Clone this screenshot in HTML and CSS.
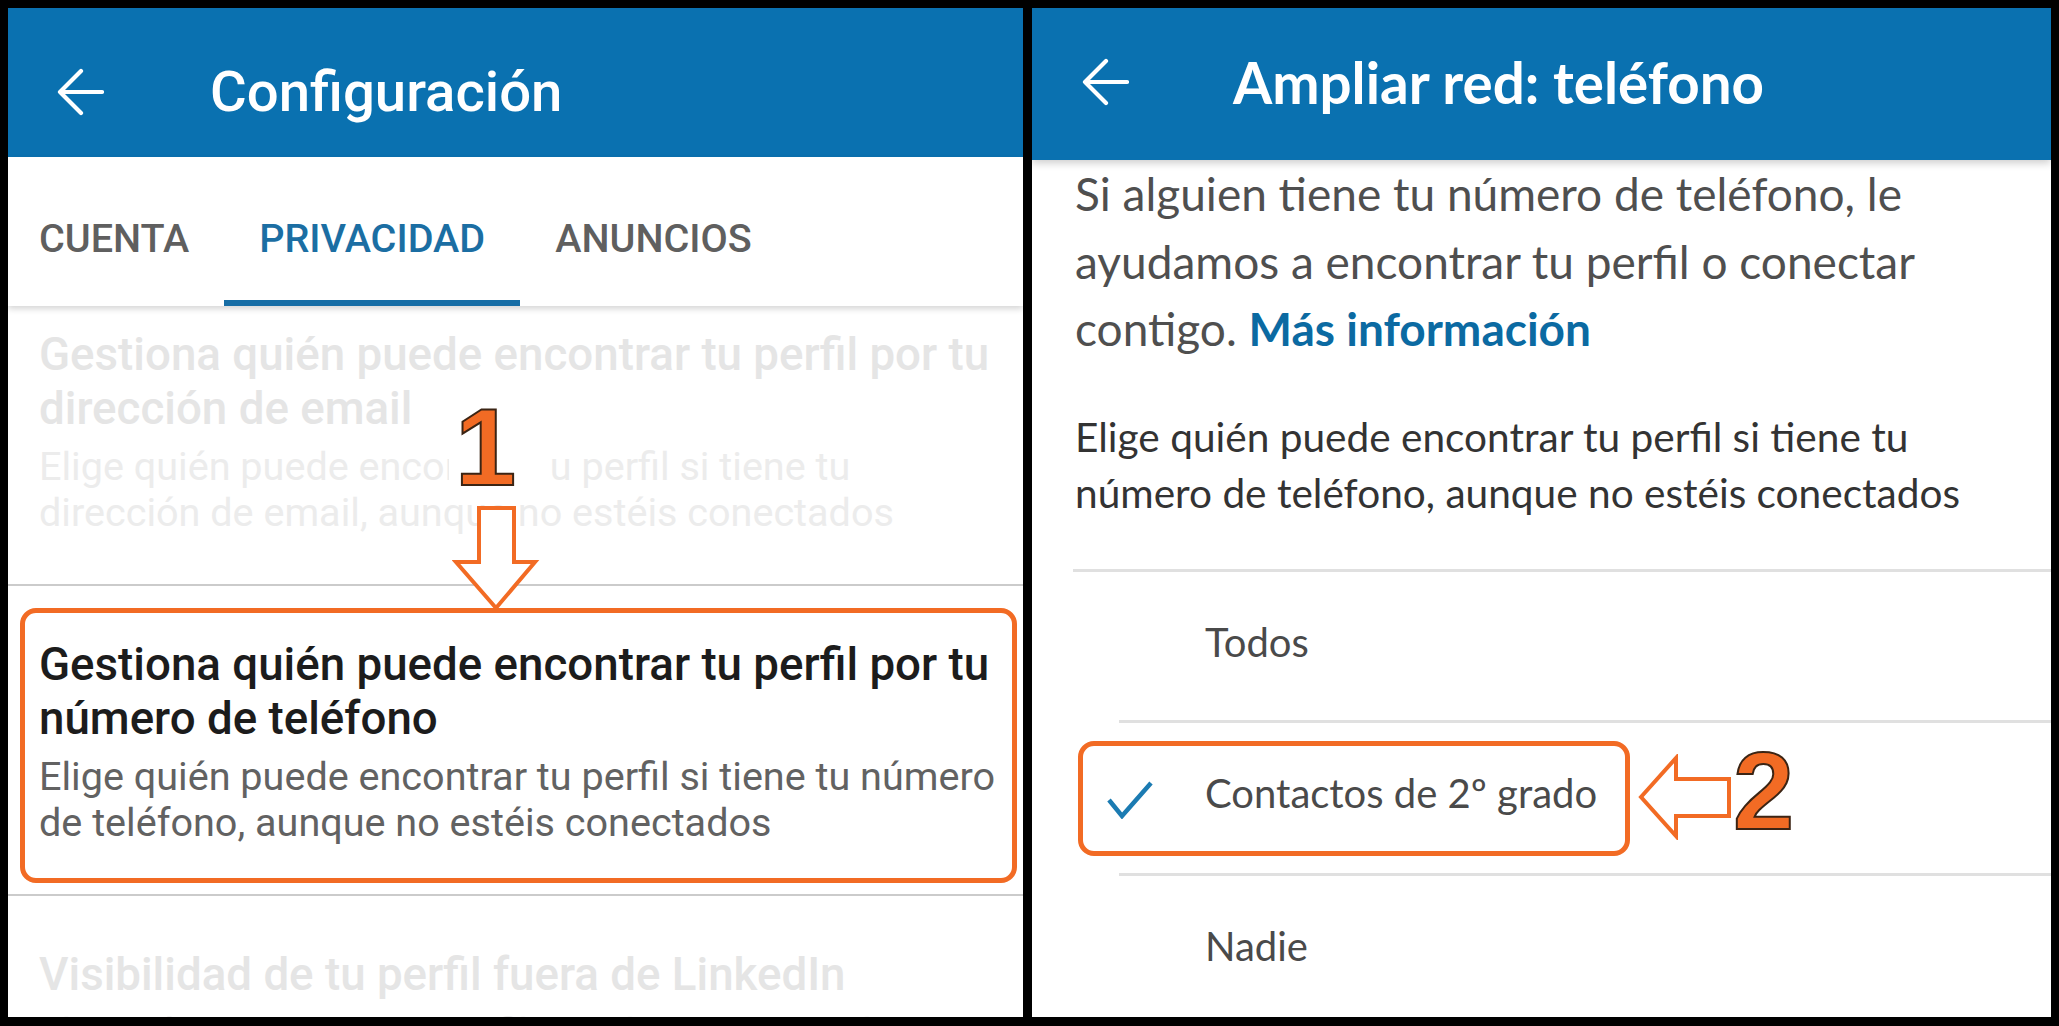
FILE: index.html
```html
<!DOCTYPE html>
<html lang="es">
<head>
<meta charset="utf-8">
<title>Configuración</title>
<link rel="stylesheet" href="styles.css">
</head>
<body>
<div class="frame">
  <section class="panel left">
    <header class="appbar">
      <svg class="back" viewBox="0 0 48 48"><path d="M4 24H46M25 3L4 24L25 45"/></svg>
      <h1 class="title">Configuración</h1>
    </header>
    <nav class="tabs">
      <div class="tab first">CUENTA</div>
      <div class="tab active">PRIVACIDAD</div>
      <div class="tab">ANUNCIOS</div>
    </nav>
    <div class="list">
      <div class="item faded scrolled">
        <div class="item-title">Gestiona quién puede encontrar tu perfil por tu<br>dirección de email</div>
        <div class="item-sub">Elige quién puede encontrar tu perfil si tiene tu<br>dirección de email, aunque no estéis conectados</div>
      </div>
      <div class="item">
        <div class="item-title">Gestiona quién puede encontrar tu perfil por tu<br>número de teléfono</div>
        <div class="item-sub">Elige quién puede encontrar tu perfil si tiene tu número<br>de teléfono, aunque no estéis conectados</div>
      </div>
      <div class="item faded">
        <div class="item-title">Visibilidad de tu perfil fuera de LinkedIn</div>
        <div class="item-sub">Elige cómo aparece tu perfil para los usuarios de otros servicios</div>
      </div>
    </div>
  </section>

  <section class="panel right">
    <header class="appbar">
      <svg class="back" viewBox="0 0 48 48"><path d="M4 24H46M25 3L4 24L25 45"/></svg>
      <h1 class="title">Ampliar red: teléfono</h1>
    </header>
    <div class="content">
      <p class="para1">Si alguien tiene tu número de teléfono, le<br>ayudamos a encontrar tu perfil o conectar<br>contigo. <a class="link">Más información</a></p>
      <p class="para2">Elige quién puede encontrar tu perfil si tiene tu<br>número de teléfono, aunque no estéis conectados</p>
      <div class="options">
        <div class="option"><span class="mark"></span><span class="label">Todos</span></div>
        <div class="option"><span class="mark"><svg class="check" viewBox="0 0 46 38"><path d="M2 19L15 35L44 2"/></svg></span><span class="label">Contactos de 2º grado</span></div>
        <div class="option"><span class="mark"></span><span class="label">Nadie</span></div>
      </div>
    </div>
  </section>

  <div class="hl hl1"></div>
  <div class="num n1">1</div>
  <svg class="arrow a1" viewBox="0 0 88 110"><polygon points="27,4 62,4 62,58 83,58 44,104 4,58 27,58"/></svg>

  <div class="hl hl2"></div>
  <svg class="arrow a2" viewBox="0 0 96 86"><polygon points="4,43 39,4 39,25 92,25 92,62 39,62 39,82"/></svg>
  <div class="num n2">2</div>
</div>
</body>
</html>
```
FILE: styles.css
```css
* { box-sizing: border-box; margin: 0; padding: 0; }
html, body { background: #000; }
body { width: 2059px; height: 1026px; overflow: hidden; }

.frame {
  position: relative;
  display: flex;
  gap: 9px;
  width: 2059px;
  height: 1026px;
  padding: 8px 8px 9px;
}

.panel {
  background: #fff;
  height: 1009px;
  overflow: hidden;
  display: flex;
  flex-direction: column;
}
.left { width: 1015px; font-family: Roboto, "Noto Sans", sans-serif; }
.right { width: 1019px; font-family: Lato, "Open Sans", sans-serif; }

/* app bars */
.appbar {
  flex: none;
  background: #0a71b0;
  color: #fff;
  display: flex;
  align-items: center;
}
.left .appbar { height: 149px; padding-top: 18px; padding-left: 48px; }
.right .appbar {
  height: 152px;
  padding-bottom: 5px;
  padding-left: 49px;
  position: relative;
  z-index: 1;
  box-shadow: 0 3px 8px rgba(0, 0, 0, 0.2);
}
.back {
  flex: none;
  width: 48px;
  height: 48px;
  fill: none;
  stroke: #fff;
  stroke-width: 4.2;
  stroke-linecap: round;
  stroke-linejoin: round;
}
.title { font-size: 56px; white-space: nowrap; }
.left .title { margin-left: 106px; font-weight: 500; font-size: 56.3px; }
.right .title { margin-left: 104px; font-weight: 700; font-size: 56.5px; }

/* tabs */
.tabs {
  flex: none;
  display: flex;
  height: 149px;
  background: #fff;
  position: relative;
  z-index: 1;
  box-shadow: 0 3px 6px rgba(0, 0, 0, 0.16);
}
.tab {
  display: flex;
  align-items: center;
  padding: 20px 35px 0;
  border-bottom: 6px solid transparent;
  font-size: 39.6px;
  font-weight: 500;
  color: #5f5f5f;
}
.tab.first { padding-left: 31px; }
.tab.active { color: #1b6ea3; border-bottom-color: #176ea6; }

/* list */
.list { flex: 1; overflow: hidden; }
.item {
  padding: 52px 31px 48px;
  border-bottom: 2px solid #cbcbcb;
}
.item.scrolled { padding-top: 22px; }
.item-title {
  font-size: 45.7px;
  font-weight: 500;
  line-height: 54px;
  color: #1c1c1c;
  white-space: nowrap;
}
.item-sub {
  margin-top: 8px;
  font-size: 39.6px;
  line-height: 46px;
  color: #626262;
  white-space: nowrap;
}
.faded .item-title { color: #e5e5e5; }
.faded .item-sub { color: #ececec; }

/* right content */
.content { padding-left: 43px; }
.para1 {
  font-size: 46px;
  line-height: 67.5px;
  color: #4f4f4f;
  white-space: nowrap;
}
.link { color: #0b6aa2; font-weight: 700; }
.para2 {
  margin-top: 46px;
  font-size: 40.6px;
  line-height: 56.5px;
  color: #333;
  white-space: nowrap;
}
.options {
  margin-top: 47px;
  margin-left: -2px;
  border-top: 3px solid #e0e0e0;
}
.option {
  position: relative;
  display: flex;
  padding: 47px 0 54px;
  font-size: 40px;
  line-height: 47px;
  color: #4a4a4a;
}
.option + .option { padding-top: 50px; }
.option + .option::before {
  content: "";
  position: absolute;
  left: 46px;
  right: 0;
  top: 0;
  height: 3px;
  background: #e0e0e0;
}
.mark { flex: none; width: 132px; display: flex; align-items: flex-start; }
.check {
  width: 46px;
  height: 38px;
  margin-left: 34px;
  margin-top: 11px;
  fill: none;
  stroke: #1b7bb2;
  stroke-width: 4.5;
}

/* annotations */
.hl {
  position: absolute;
  border: 5px solid #f26b24;
  border-radius: 16px;
}
.hl1 { left: 20px; top: 608px; width: 997px; height: 275px; }
.hl2 { left: 1078px; top: 741px; width: 552px; height: 115px; }

.num {
  position: absolute;
  font-family: "Liberation Sans", Arial, sans-serif;
  font-weight: 700;
  font-size: 110px;
  line-height: 110px;
  color: #f26b24;
  -webkit-text-stroke: 2px #3b2414;
}
.n1 { left: 449px; top: 392px; width: 100px; height: 100px; padding-left: 6px; background: #fff; }
.n2 { left: 1733px; top: 736px; }

.arrow {
  position: absolute;
  fill: #fff;
  stroke: #f26b24;
  stroke-width: 4;
  stroke-linejoin: miter;
}
.a1 { left: 452px; top: 504px; width: 88px; height: 110px; }
.a2 { left: 1637px; top: 754px; width: 96px; height: 86px; }
```
